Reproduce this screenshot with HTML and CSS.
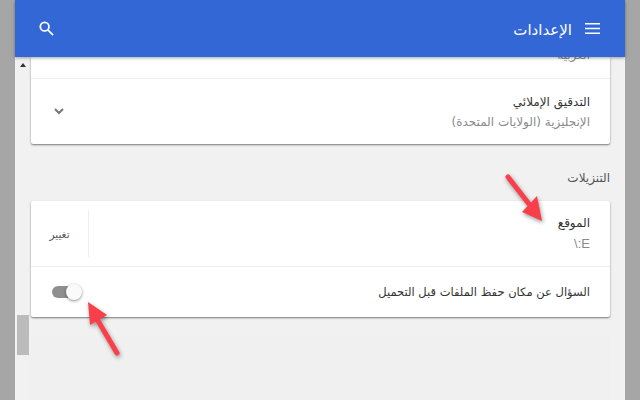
FILE: index.html
```html
<!DOCTYPE html>
<html lang="ar" dir="rtl">
<head>
    <meta charset="UTF-8">
    <title>الإعدادات</title>
    <link rel="stylesheet" href="styles.css">
</head>
<body>
    <div class="app">
        <header class="toolbar">
            <svg class="menu-icon" viewBox="0 0 16 12"><path d="M0 1h16M0 6h16M0 11h16"/></svg>
            <h1>الإعدادات</h1>
            <svg class="search-icon" viewBox="0 0 16 16"><circle cx="6" cy="6" r="4.6"/><path d="M9.4 9.4 15 15"/></svg>
        </header>
        <div class="content">
            <main class="settings">
                <section class="card card-top">
                    <div class="row row-cut"><span class="sub">العربية</span></div>
                    <div class="row row-tall">
                        <div class="labels">
                            <div class="label">التدقيق الإملائي</div>
                            <div class="sub">الإنجليزية (الولايات المتحدة)</div>
                        </div>
                        <svg class="chevron" viewBox="0 0 10 7"><path d="M1 1l4 4 4-4"/></svg>
                    </div>
                </section>
                <h2>التنزيلات</h2>
                <section class="card">
                    <div class="row row-tall row-location">
                        <div class="labels">
                            <div class="label">الموقع</div>
                            <div class="sub path">E:\</div>
                        </div>
                        <div class="change">تغيير</div>
                    </div>
                    <div class="row row-toggle">
                        <div class="label label-long">السؤال عن مكان حفظ الملفات قبل التحميل</div>
                        <div class="toggle"><span class="knob"></span></div>
                    </div>
                </section>
                <div class="empty"></div>
            </main>
            <div class="scrollbar">
                <span class="scroll-up"></span>
                <span class="scroll-thumb"></span>
            </div>
        </div>
        <svg class="arrow arrow-one" viewBox="0 0 50 55"><path d="M10 8 31 35"/><path class="head" d="M44 52 24 43 39 27z"/></svg>
        <svg class="arrow arrow-two" viewBox="0 0 45 65"><path d="M35 56 15 22"/><path class="head" d="M6 5 25 18 8 28z"/></svg>
    </div>
</body>
</html>
```
FILE: styles.css
```css
body {
    margin: 0;
    height: 400px;
    overflow: hidden;
    background-color: #a6a6a6;
    font-family: "DejaVu Sans", "Noto Sans", sans-serif;
    color: #333;
}
.app {
    position: relative;
    width: 610px;
    height: 400px;
    margin: 0 15px;
    background-color: #f1f1f1;
    display: flex;
    flex-direction: column;
}
.toolbar {
    height: 57px;
    flex: none;
    box-sizing: border-box;
    padding: 0 25px 0 24px;
    background-color: #3367d6;
    color: #fff;
    display: flex;
    align-items: center;
    box-shadow: 0 1px 3px rgba(0, 0, 0, 0.35);
    position: relative;
    z-index: 1;
}
.toolbar h1 {
    margin: 3px 13px 0 0;
    font-size: 15px;
    font-weight: normal;
}
.menu-icon {
    width: 15px;
    height: 13px;
    fill: none;
    stroke: #fff;
    stroke-width: 1.7;
}
.search-icon {
    width: 15px;
    height: 15px;
    margin-right: auto;
    margin-top: -1px;
    fill: none;
    stroke: #fff;
    stroke-width: 1.9;
}
.content {
    flex: 1;
    min-height: 0;
    overflow: hidden;
    display: flex;
}
.settings {
    width: 579px;
    margin-right: 15px;
}
.scrollbar {
    width: 12px;
    margin-right: 2px;
    display: flex;
    flex-direction: column;
    align-items: center;
}
.scroll-up {
    width: 0;
    height: 0;
    margin-top: 6px;
    border-left: 3.5px solid transparent;
    border-right: 3.5px solid transparent;
    border-bottom: 4px solid #333;
}
.scroll-thumb {
    width: 12px;
    height: 40px;
    margin-top: 248px;
    background-color: #bbb;
}
.card {
    background-color: #fff;
    border-radius: 2px;
    box-shadow: 0 1px 2px rgba(0, 0, 0, 0.5);
}
.card-top {
    border-radius: 0 0 2px 2px;
}
.row {
    box-sizing: border-box;
    padding: 0 20px 0 0;
    display: flex;
    align-items: center;
    justify-content: space-between;
    border-bottom: 1px solid #eee;
}
.row:last-child {
    border-bottom: none;
}
.row-cut {
    height: 22px;
    overflow: hidden;
    align-items: flex-start;
}
.row-cut .sub {
    margin-top: -9px;
}
.row-tall {
    height: 65px;
}
.row-location {
    height: 66px;
}
.row-toggle {
    height: 50px;
}
.label {
    font-size: 12px;
    color: #333;
}
.label-long {
    font-size: 11.5px;
}
.sub {
    font-size: 12px;
    color: #8a8a8a;
}
.labels .sub {
    margin-top: 6px;
}
.path {
    font-family: "Liberation Sans", sans-serif;
    font-size: 13px;
}
h2 {
    margin: 27px 0 16px;
    font-size: 12px;
    font-weight: normal;
    color: #555;
}
.chevron {
    width: 10px;
    height: 7px;
    margin-left: 23px;
    fill: none;
    stroke: #777;
    stroke-width: 2;
}
.change {
    width: 58px;
    height: 47px;
    box-sizing: border-box;
    border-right: 1px solid #eee;
    display: flex;
    align-items: center;
    justify-content: center;
    font-size: 10.5px;
    color: #555;
}
.toggle {
    position: relative;
    width: 26px;
    height: 12px;
    margin-left: 21px;
    border-radius: 6px;
    background-color: #8f8f8f;
}
.knob {
    position: absolute;
    top: -2px;
    left: 14px;
    width: 16px;
    height: 16px;
    border-radius: 50%;
    background-color: #fafafa;
    box-shadow: 0 1px 3px rgba(0, 0, 0, 0.45);
}
.empty {
    height: 63px;
    margin-top: 20px;
    background-color: #f0f0f0;
}
.arrow {
    position: absolute;
    fill: none;
    stroke: #f9404a;
    stroke-width: 5;
    stroke-linecap: round;
    filter: drop-shadow(1px 2px 2px rgba(0, 0, 0, 0.4));
}
.arrow .head {
    fill: #f9404a;
    stroke: none;
}
.arrow-one {
    left: 483px;
    top: 169px;
    width: 50px;
    height: 55px;
}
.arrow-two {
    left: 67px;
    top: 297px;
    width: 45px;
    height: 65px;
}
```
